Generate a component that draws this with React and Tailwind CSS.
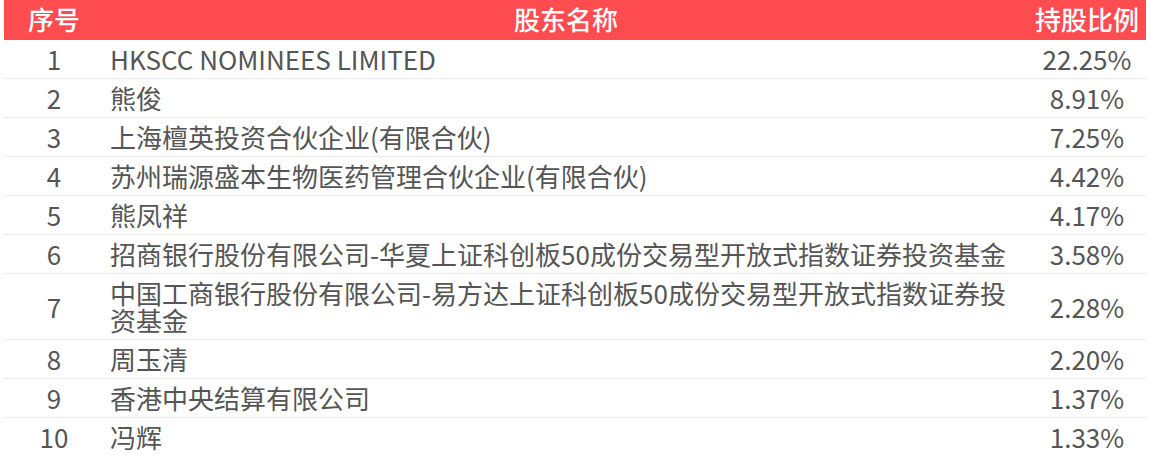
import React from "react";

const rows = [
  ["1", "HKSCC NOMINEES LIMITED", "22.25%"],
  ["2", "熊俊", "8.91%"],
  ["3", "上海檀英投资合伙企业(有限合伙)", "7.25%"],
  ["4", "苏州瑞源盛本生物医药管理合伙企业(有限合伙)", "4.42%"],
  ["5", "熊凤祥", "4.17%"],
  ["6", "招商银行股份有限公司-华夏上证科创板50成份交易型开放式指数证券投资基金", "3.58%"],
  ["7", "中国工商银行股份有限公司-易方达上证科创板50成份交易型开放式指数证券投资基金", "2.28%"],
  ["8", "周玉清", "2.20%"],
  ["9", "香港中央结算有限公司", "1.37%"],
  ["10", "冯辉", "1.33%"],
];

export default function App() {
  return (
    <div
      className="w-[1150px] h-[456px] bg-white px-[4px] overflow-hidden"
      style={{ fontFamily: '"Noto Sans CJK SC", "Noto Sans", sans-serif' }}
    >
      <div className="grid grid-cols-[100px_924px_118px] bg-[#ff4c50] text-white text-[26px] font-medium h-[40px] leading-[38px]">
        <div className="text-center">序号</div>
        <div className="text-center">股东名称</div>
        <div className="text-center">持股比例</div>
      </div>
      {rows.map(([n, name, pct]) => (
        <div
          key={n}
          className="grid grid-cols-[100px_924px_118px] items-center border-b border-[#e9e9ef] text-[#555555] text-[26px] leading-[27px] pt-[5px] pb-[6px] last:border-b-0"
        >
          <div className="text-center">{n}</div>
          <div className="px-[6px]">{name}</div>
          <div className="text-center">{pct}</div>
        </div>
      ))}
    </div>
  );
}
